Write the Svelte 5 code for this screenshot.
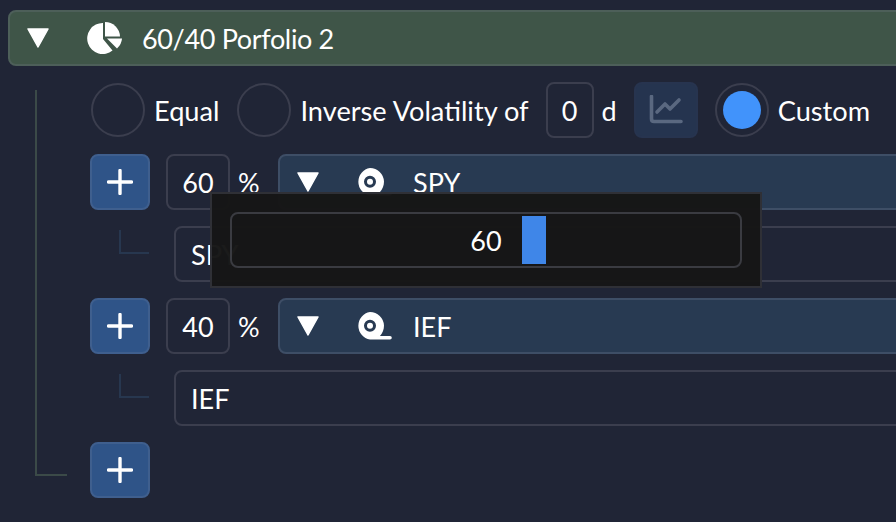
<script lang="ts">
	const allocations = [
		{ weight: 60, ticker: 'SPY' },
		{ weight: 40, ticker: 'IEF' }
	];
</script>

{#snippet triangle()}
	<svg class="triangle" width="24" height="22" viewBox="0 0 24 22">
		<path d="M2 2 H22 L12 20 Z" fill="#fff" stroke="#fff" stroke-width="1.5" stroke-linejoin="round" />
	</svg>
{/snippet}

{#snippet tape()}
	<svg class="tape" width="36" height="28" viewBox="0 0 36 28">
		<path
			fill="#fff"
			fill-rule="evenodd"
			d="M14 0 A14 14 0 0 1 28 13.5 C28 18 26.5 21 24 24 H34 A1.8 1.8 0 0 1 34 27.6 H14 A14 14 0 0 1 14 0 Z M14 7.8 A6 6 0 1 0 14 19.8 A6 6 0 1 0 14 7.8 Z M14 10.8 A3 3 0 1 1 14 16.8 A3 3 0 1 1 14 10.8 Z"
		/>
	</svg>
{/snippet}

{#snippet plus()}
	<button class="plus" type="button" aria-label="Add">
		<svg width="26" height="26" viewBox="0 0 26 26">
			<path d="M13 1.5 V24.5 M1.5 13 H24.5" stroke="#fff" stroke-width="3.4" stroke-linecap="round" />
		</svg>
	</button>
{/snippet}

<div class="page">
	<header class="group">
		{@render triangle()}
		<svg class="pie" width="36" height="34" viewBox="0 0 36 34">
			<path fill="#fff" d="M16 2 V18 L25.5 29.5 A15.5 15.5 0 1 1 16 2 Z" />
			<path fill="#fff" d="M18 1 A15 15 0 0 1 33 15.5 H18 Z" />
			<path fill="#fff" d="M20 17.5 H35 A15 15 0 0 1 30 27.5 Z" />
		</svg>
		<span class="title">60/40 Porfolio 2</span>
	</header>

	<div class="body">
		<div class="tree-line"></div>

		<div class="weighting">
			<span class="radio"></span>
			<span class="option">Equal</span>
			<span class="radio spaced"></span>
			<span class="option">Inverse Volatility of</span>
			<span class="field days">0</span>
			<span class="unit">d</span>
			<button class="chart" type="button" aria-label="Chart">
				<svg width="34" height="30" viewBox="0 0 34 30">
					<path d="M2.5 1.5 V24 Q2.5 26.5 5 26.5 H32" fill="none" stroke="#5a6880" stroke-width="3.6" stroke-linecap="round" />
					<path d="M8 17 L16 9 L21 14 L30 5" fill="none" stroke="#5a6880" stroke-width="3.6" stroke-linecap="round" stroke-linejoin="round" />
				</svg>
			</button>
			<span class="radio selected"><span class="dot"></span></span>
			<span class="option">Custom</span>
		</div>

		{#each allocations as item}
			<div class="row">
				{@render plus()}
				<span class="field weight">{item.weight}</span>
				<span class="percent">%</span>
				<div class="asset">
					{@render triangle()}
					{@render tape()}
					<span class="asset-name">{item.ticker}</span>
				</div>
			</div>
			<div class="row sub">
				<span class="elbow"></span>
				<span class="field ticker">{item.ticker}</span>
			</div>
		{/each}

		<div class="row">
			{@render plus()}
		</div>

		<div class="popup">
			<div class="popup-input">
				<span>60</span>
				<span class="caret"></span>
			</div>
		</div>
	</div>
</div>

<style>
	:global(body) {
		margin: 0;
		background: #202536;
	}

	.page {
		box-sizing: border-box;
		width: 896px;
		height: 522px;
		padding: 10px 0 0 8px;
		overflow: hidden;
		background: #202536;
		color: #fff;
		font-family: Lato, sans-serif;
		font-size: 27px;
		line-height: 30px;
	}

	.group {
		box-sizing: border-box;
		display: flex;
		align-items: center;
		width: 920px;
		height: 56px;
		padding-left: 16px;
		border: 2px solid #4d5f59;
		border-radius: 8px;
		background: #3f5548;
	}

	.triangle {
		flex: none;
	}

	.pie {
		margin-left: 37px;
	}

	.title {
		margin-left: 19px;
		padding-top: 2px;
		letter-spacing: -0.35px;
	}

	.body {
		position: relative;
		display: flex;
		flex-direction: column;
		gap: 16px;
		width: 920px;
		padding: 16px 0 0 82px;
	}

	.tree-line {
		position: absolute;
		left: 27px;
		top: 24px;
		width: 30px;
		height: 384px;
		border-left: 2px solid #3b4a48;
		border-bottom: 2px solid #3b4a48;
	}

	.weighting {
		display: flex;
		align-items: center;
		height: 56px;
	}

	.radio {
		box-sizing: border-box;
		display: flex;
		align-items: center;
		justify-content: center;
		flex: none;
		width: 54px;
		height: 54px;
		margin-left: 1px;
		border: 2px solid #3b3e4e;
		border-radius: 50%;
	}

	.radio.spaced {
		margin-left: 18px;
	}

	.radio.selected {
		margin-left: 17px;
	}

	.dot {
		width: 38px;
		height: 38px;
		border-radius: 50%;
		background: #4193fb;
	}

	.option {
		margin-left: 9px;
		padding-top: 2px;
		font-size: 27.2px;
	}

	.field {
		box-sizing: border-box;
		display: flex;
		align-items: center;
		height: 56px;
		padding-top: 2px;
		border: 2px solid #3b3e4e;
		border-radius: 8px;
	}

	.days {
		justify-content: center;
		width: 48px;
		margin-left: 17px;
	}

	.unit {
		margin-left: 8px;
		padding-top: 2px;
	}

	.chart {
		display: flex;
		align-items: center;
		justify-content: center;
		width: 64px;
		height: 56px;
		margin-left: 17px;
		padding: 0;
		border: 2px solid #27344f;
		border-radius: 8px;
		background: #25344f;
	}

	.row {
		display: flex;
		align-items: center;
		height: 56px;
	}

	.plus {
		display: flex;
		align-items: center;
		justify-content: center;
		flex: none;
		width: 60px;
		height: 56px;
		padding: 0;
		border: 2px solid #3f5f8e;
		border-radius: 8px;
		background: #2f5488;
	}

	.weight {
		justify-content: center;
		width: 64px;
		margin-left: 16px;
	}

	.percent {
		box-sizing: border-box;
		width: 48px;
		padding: 2px 0 0 8px;
	}

	.asset {
		box-sizing: border-box;
		display: flex;
		align-items: center;
		flex: 1;
		height: 56px;
		padding-left: 16px;
		border: 2px solid #3e4e66;
		border-radius: 8px;
		background: #283a52;
	}

	.tape {
		margin-left: 36px;
	}

	.asset-name {
		margin-left: 21px;
		padding-top: 2px;
	}

	.elbow {
		box-sizing: border-box;
		flex: none;
		width: 30px;
		height: 24px;
		margin: -24px 0 0 29px;
		border-left: 2px solid #27374f;
		border-bottom: 2px solid #27374f;
	}

	.ticker {
		flex: 1;
		margin-left: 25px;
		padding-left: 15px;
	}

	.popup {
		box-sizing: border-box;
		position: absolute;
		left: 202px;
		top: 126px;
		width: 552px;
		height: 96px;
		padding: 18px;
		border: 2px solid #2f3036;
		background: rgba(22, 22, 22, 0.98);
	}

	.popup-input {
		box-sizing: border-box;
		position: relative;
		display: flex;
		align-items: center;
		justify-content: center;
		height: 56px;
		padding-top: 2px;
		border: 2px solid #3a3b41;
		border-radius: 8px;
	}

	.caret {
		position: absolute;
		left: 290px;
		top: 2px;
		width: 24px;
		height: 48px;
		background: #3f86e8;
	}
</style>
